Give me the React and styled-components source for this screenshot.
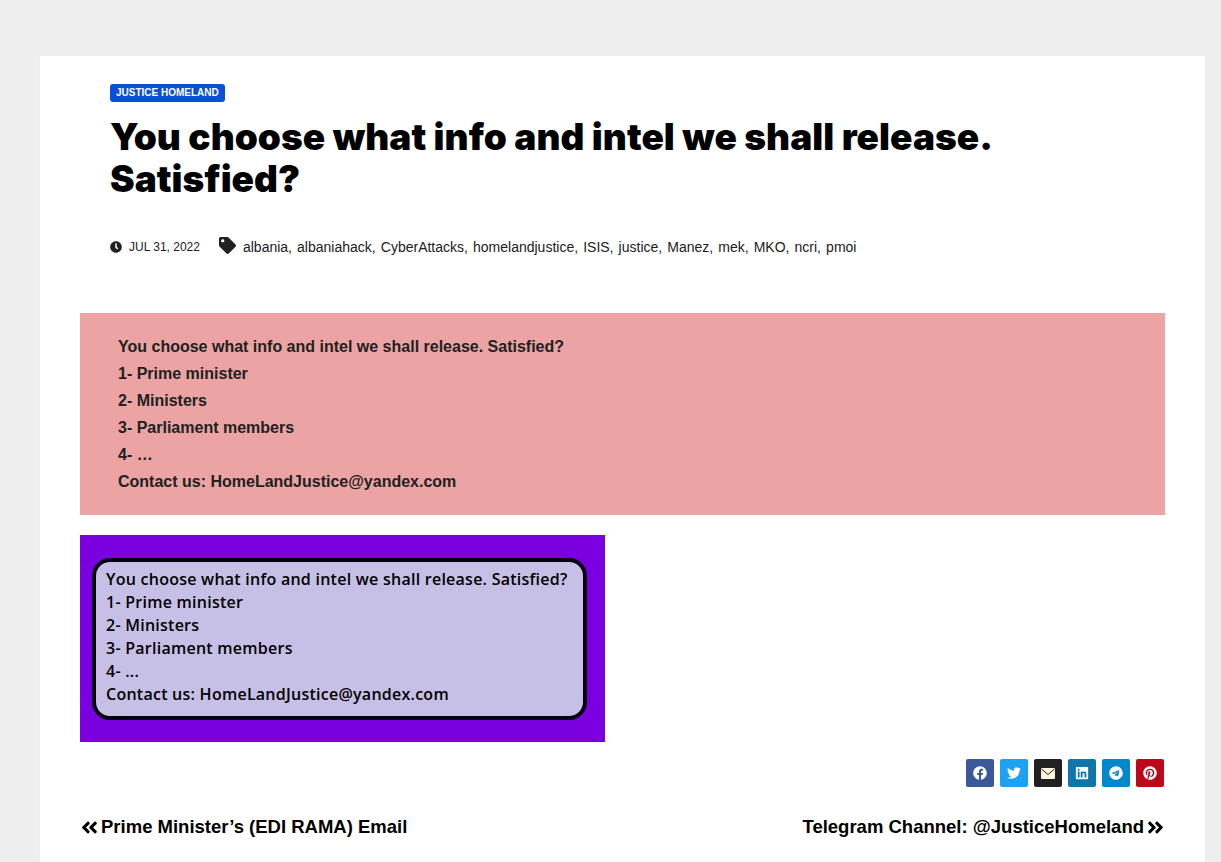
import React from 'react';
import styled, { createGlobalStyle } from 'styled-components';
import { FaClock, FaTag, FaFacebook, FaTwitter, FaLinkedin, FaTelegram, FaPinterest, FaAngleDoubleLeft, FaAngleDoubleRight } from 'react-icons/fa';

const GlobalStyle = createGlobalStyle`
    html, body {
        margin: 0;
        height: 862px;
        overflow: hidden;
        background: #eeeeee;
        font-family: "Liberation Sans", Arial, sans-serif;
    }
`;

const Page = styled.div`
    padding: 56px 16px 0 40px;
`;

const Card = styled.article`
    background: #fff;
    box-shadow: 0 0 1px rgba(0, 0, 0, 0.05);
    padding: 28px 40px 60px;
`;

const Header = styled.header`
    padding: 0 30px;
`;

const Badge = styled.a`
    display: inline-block;
    background: #0a4fd8;
    color: #fff;
    font-size: 10px;
    font-weight: 700;
    line-height: 18px;
    height: 18px;
    padding: 0 6px;
    border-radius: 3px;
    vertical-align: top;
`;

const Title = styled.h1`
    margin: 14px 0 0;
    font-family: Inter, sans-serif;
    font-weight: 900;
    font-size: 37px;
    line-height: 42px;
    letter-spacing: 0.04px;
    color: #000;
`;

const Meta = styled.div`
    display: flex;
    align-items: center;
    margin-top: 37px;
    height: 20px;
    color: #212121;
`;

const DateText = styled.span`
    font-size: 12px;
    margin: 0 19px 0 7px;
`;

const TagIcon = styled(FaTag)`
    margin-top: -3px;
`;

const TagList = styled.span`
    font-size: 14px;
    margin-left: 7px;
    word-spacing: 1.2px;
`;

const Notice = styled.div`
    margin-top: 56px;
    background: #eba3a3;
    padding: 20px 38px 20px;
    color: #212121;
    font-size: 16px;
    font-weight: 700;
    line-height: 27px;
`;

const Poster = styled.div`
    margin-top: 20px;
    width: 525px;
    height: 207px;
    box-sizing: border-box;
    padding: 23px 18px 22px 12px;
    background: #7b00e0;
`;

const PosterBox = styled.div`
    height: 100%;
    box-sizing: border-box;
    border: 4px solid #05000f;
    border-radius: 18px;
    background: #c6bfe6;
    padding: 6px 10px;
    color: #000;
    font-family: "Open Sans", sans-serif;
    font-size: 16px;
    font-weight: 600;
    letter-spacing: 0.25px;
    line-height: 23px;
    white-space: nowrap;
`;

const ShareRow = styled.div`
    display: flex;
    justify-content: flex-end;
    gap: 6px;
    margin: 17px 1px 0 0;
`;

const ShareButton = styled.a`
    display: flex;
    align-items: center;
    justify-content: center;
    width: 28px;
    height: 28px;
    border-radius: 2px;
    background: ${(props) => props.$bg};
    color: #fff;
    font-size: 14px;
`;

const PostNav = styled.nav`
    display: flex;
    justify-content: space-between;
    margin-top: 28px;
    color: #000;
    font-size: 18.5px;
    font-weight: 700;
    line-height: 24px;
`;

const NavLink = styled.a`
    display: flex;
    align-items: center;
    gap: 2px;
`;

const tags = 'albania, albaniahack, CyberAttacks, homelandjustice, ISIS, justice, Manez, mek, MKO, ncri, pmoi';

const lines = [
    'You choose what info and intel we shall release. Satisfied?',
    '1- Prime minister',
    '2- Ministers',
    '3- Parliament members',
    '4- …',
    'Contact us: HomeLandJustice@yandex.com',
];

// the mail button has a pale, slightly yellow envelope in the reference
const EnvelopeIcon = () => (
    <svg width="14" height="11" viewBox="0 0 14 11">
        <rect width="14" height="11" rx="1" fill="#fdf6dc" />
        <path d="M0.5 1 L7 6.5 L13.5 1" fill="none" stroke="#212121" strokeWidth="1" />
    </svg>
);

const App = () => (
    <Page>
        <GlobalStyle />
        <Card>
            <Header>
                <Badge>JUSTICE HOMELAND</Badge>
                <Title>You choose what info and intel we shall release. Satisfied?</Title>
                <Meta>
                    <FaClock size={12} />
                    <DateText>JUL 31, 2022</DateText>
                    <TagIcon size={17} />
                    <TagList>{tags}</TagList>
                </Meta>
            </Header>
            <Notice>
                {lines.map((line) => (
                    <div key={line}>{line}</div>
                ))}
            </Notice>
            <Poster>
                <PosterBox>
                    {lines.map((line) => (
                        <div key={line}>{line === '4- …' ? '4- ...' : line}</div>
                    ))}
                </PosterBox>
            </Poster>
            <ShareRow>
                <ShareButton $bg="#3b5998"><FaFacebook /></ShareButton>
                <ShareButton $bg="#1da1f2"><FaTwitter /></ShareButton>
                <ShareButton $bg="#212121"><EnvelopeIcon /></ShareButton>
                <ShareButton $bg="#0e76a8"><FaLinkedin /></ShareButton>
                <ShareButton $bg="#0088cc"><FaTelegram /></ShareButton>
                <ShareButton $bg="#bd081c"><FaPinterest /></ShareButton>
            </ShareRow>
            <PostNav>
                <NavLink><FaAngleDoubleLeft size={19} />Prime Minister’s (EDI RAMA) Email</NavLink>
                <NavLink>Telegram Channel: @JusticeHomeland<FaAngleDoubleRight size={19} /></NavLink>
            </PostNav>
        </Card>
    </Page>
);

export default App;
